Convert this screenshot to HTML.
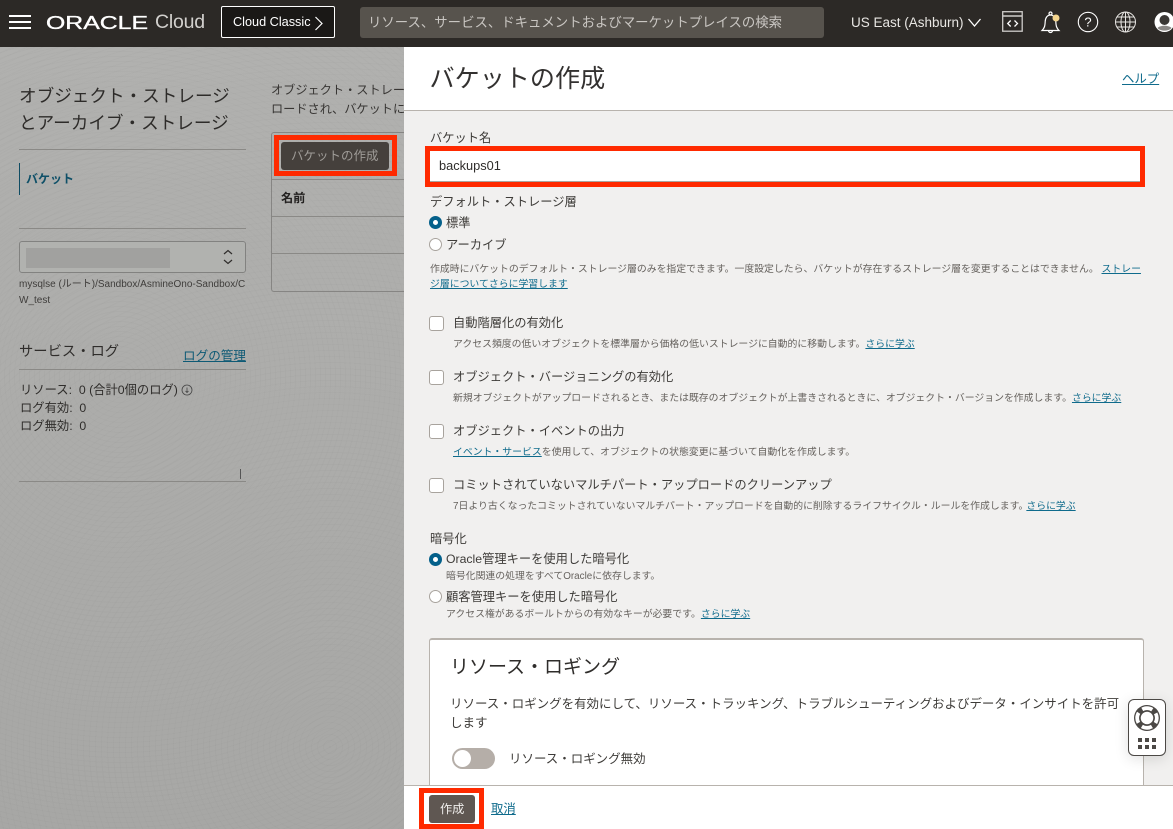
<!DOCTYPE html>
<html lang="ja"><head><meta charset="utf-8"><title>バケットの作成</title>
<style>
html,body{margin:0;padding:0}
body{width:1173px;height:829px;overflow:hidden;position:relative;background:#adadab;font-family:"Liberation Sans","Noto Sans CJK JP",sans-serif;color:#3a3835}
.t{position:absolute;white-space:nowrap;line-height:1}
.b{position:absolute;box-sizing:border-box}
a{color:#0f6b8c;text-decoration:underline}
.d{color:#2f2d2b}
.l{background:#8a8986;height:1px;position:absolute}
.s{font-size:9.870px;color:#66625e}
.m{font-size:12.250px;color:#3e3c39}
.cb{position:absolute;left:429px;width:15px;height:15px;box-sizing:border-box;background:#fff;border:1px solid #a8a39d;border-radius:3px}
.red{position:absolute;box-sizing:border-box;border:5px solid #ff2a00}
.rd{position:absolute;left:429px;width:13px;height:13px;box-sizing:border-box;border-radius:50%}
.on{background:#fff;border:4px solid #04608a}
.off{background:#fff;border:1px solid #a8a39d}
</style></head><body>
<div class="b" style="left:0;top:47px;width:404px;height:782px;background:
repeating-radial-gradient(circle at 120px 330px,rgba(0,0,0,.014) 0 1px,transparent 1px 5px),
repeating-radial-gradient(circle at 330px 700px,rgba(0,0,0,.014) 0 1px,transparent 1px 6px),
linear-gradient(#b1b1af,#a7a7a5)"></div>

<!-- top bar -->
<div class="b" style="left:0;top:0;width:1173px;height:47px;background:#2c2926"></div>
<div class="b" style="left:9px;top:15px;width:22px;height:2px;background:#fff"></div>
<div class="b" style="left:9px;top:21px;width:22px;height:2px;background:#fff"></div>
<div class="b" style="left:9px;top:27px;width:22px;height:2px;background:#fff"></div>
<svg style="position:absolute;left:44px;top:10px" width="108" height="26"><text x="2" y="19" font-family="Liberation Sans" font-size="18" font-weight="400" fill="#fff" stroke="#fff" stroke-width=".35" textLength="102" lengthAdjust="spacingAndGlyphs">ORACLE</text></svg>
<div class="t" style="left:155px;top:13px;font-size:19.500px;color:#d2d0cd;font-weight:400;letter-spacing:-.2px">Cloud</div>
<div class="b" style="left:221px;top:6px;width:114px;height:32px;background:#1a1816;border:1px solid #fff;border-radius:2px"></div>
<div class="t" style="left:233px;top:16px;font-size:12.700px;color:#fff">Cloud Classic</div>
<svg style="position:absolute;left:314px;top:15px" width="10" height="16"><path d="M1.500 2L8 8.500L1.500 15" fill="none" stroke="#fff" stroke-width="1.200"/></svg>
<div class="b" style="left:360px;top:7px;width:464px;height:31px;background:#57534d;border-radius:3px"></div>
<div class="t" style="left:368px;top:16px;font-size:13.400px;color:#c9c6c2">リソース、サービス、ドキュメントおよびマーケットプレイスの検索</div>
<div class="t" style="left:851px;top:16px;font-size:13.500px;color:#e8e6e3">US East (Ashburn)</div>
<svg style="position:absolute;left:967px;top:17px" width="16" height="11"><path d="M1.500 2L7.500 9L13.500 2" fill="none" stroke="#fff" stroke-width="1.300"/></svg>
<svg style="position:absolute;left:1000px;top:9px" width="25" height="25" fill="none" stroke="#cfcdca" stroke-width="1.300"><rect x="2.700" y="2.700" width="19.500" height="19.500"/><path d="M2.700 7H22.200" stroke-width="1.600"/><path d="M10.700 11.500l-3 3l3 3M14.500 11.500l3 3l-3 3" stroke="#fff"/></svg>
<svg style="position:absolute;left:1038px;top:10px" width="25" height="25" fill="none" stroke="#fff" stroke-width="1.200"><circle cx="12.500" cy="3.500" r="1.500"/><path d="M4 20.500c2.500-2.500 3-4.500 3.200-9c.2-4 2.300-6.500 5.300-6.500s5.100 2.500 5.300 6.500c.2 4.500.7 6.500 3.200 9zM10.500 20.500a2 2 0 0 0 4 0"/><circle cx="18" cy="8" r="3.500" fill="#f4d58d" stroke="none"/></svg>
<svg style="position:absolute;left:1076px;top:11px" width="23" height="23" fill="none" stroke="#fff" stroke-width="1.100"><circle cx="12" cy="11" r="9.700"/><text x="12" y="15.500" font-family="Liberation Sans" font-size="13" fill="#fff" stroke="none" text-anchor="middle">?</text></svg>
<svg style="position:absolute;left:1114px;top:11px" width="23" height="23" fill="none" stroke="#e8e6e3" stroke-width="1"><circle cx="11.500" cy="11" r="10"/><ellipse cx="11.500" cy="11" rx="4.500" ry="10"/><path d="M11.500 1V21M1.500 11H21.500M3 6H20M3 16H20"/></svg>
<svg style="position:absolute;left:1153px;top:11px" width="20" height="23"><circle cx="11.500" cy="11" r="10" fill="#fff"/><circle cx="11.500" cy="9" r="5" fill="#3a3734"/><path d="M4.500 17c2.500-3 11.500-3 14 0c-3 3.500-11 3.500-14 0z" fill="#8a8784"/></svg>

<!-- left column -->
<div class="t d" style="left:19px;top:88px;font-size:17.600px;color:#2d2b29">オブジェクト・ストレージ</div>
<div class="t d" style="left:19px;top:115px;font-size:17.600px;color:#2d2b29">とアーカイブ・ストレージ</div>
<div class="l" style="left:19px;top:149px;width:227px"></div>
<div class="b" style="left:19px;top:163px;width:1px;height:32px;background:#0f4c63"></div>
<div class="t" style="left:26px;top:173px;font-size:12px;font-weight:700;color:#0f5068">バケット</div>
<div class="l" style="left:19px;top:228px;width:227px"></div>
<div class="b" style="left:19px;top:241px;width:227px;height:32px;background:#b1b2af;border:1px solid #828280;border-radius:3px"></div>
<div class="b" style="left:26px;top:248px;width:144px;height:20px;background:#a1a19f"></div>
<svg style="position:absolute;left:222px;top:248px" width="12" height="18" fill="none" stroke="#2f2d2b" stroke-width="1.200"><path d="M2 6L6 2.500L10 6M2 12L6 15.500L10 12"/></svg>
<div class="t" style="left:19px;top:280px;font-size:10px;color:#3f3d3b">mysqlse (ルート)/Sandbox/AsmineOno-Sandbox/C</div>
<div class="t" style="left:19px;top:296px;font-size:10px;color:#3f3d3b">W_test</div>
<div class="t d" style="left:19px;top:345px;font-size:14.300px">サービス・ログ</div>
<a class="t" href="#" style="left:183px;top:350px;font-size:12.600px;color:#0e5a75">ログの管理</a>
<div class="l" style="left:19px;top:369px;width:227px"></div>
<div class="t" style="left:20px;top:384px;font-size:12.300px;color:#2f2d2b">リソース:&nbsp; 0 (合計0個のログ)</div>
<svg style="position:absolute;left:181px;top:384px" width="12" height="12" fill="none" stroke="#444" stroke-width=".8"><circle cx="6" cy="6" r="5"/><path d="M6 3.500V8M4.500 7L6 8.500L7.500 7"/></svg>
<div class="t" style="left:20px;top:402px;font-size:12.300px;color:#2f2d2b">ログ有効:&nbsp; 0</div>
<div class="t" style="left:20px;top:420px;font-size:12.300px;color:#2f2d2b">ログ無効:&nbsp; 0</div>
<div class="b" style="left:240px;top:469px;width:1px;height:10px;background:#555"></div>
<div class="l" style="left:19px;top:481px;width:227px"></div>

<!-- main column -->
<div class="t" style="left:271px;top:84px;font-size:12.200px;color:#383634">オブジェクト・ストレー</div>
<div class="t" style="left:271px;top:103px;font-size:12.200px;color:#383634">ロードされ、バケットに</div>
<div class="b" style="left:271px;top:132px;width:133px;height:160px;border:1px solid #868583;border-right:0;border-radius:3px 0 0 3px"></div>
<div class="l" style="left:272px;top:179px;width:132px"></div>
<div class="l" style="left:272px;top:216px;width:132px"></div>
<div class="l" style="left:272px;top:253px;width:132px"></div>
<div class="b" style="left:281px;top:142px;width:108px;height:28px;background:#45403c;border-radius:3px"></div>
<div class="t" style="left:291px;top:150px;font-size:12.500px;color:#9f9c98">バケットの作成</div>
<div class="t" style="left:281px;top:192px;font-size:12.200px;font-weight:700;color:#232120">名前</div>
<div class="red" style="left:274px;top:135px;width:123px;height:41px"></div>

<!-- panel -->
<div class="b" style="left:404px;top:47px;width:769px;height:782px;background:#f1f0ef"></div>
<div class="b" style="left:404px;top:47px;width:769px;height:64px;background:#fff;border-bottom:1px solid #b8b3ad"></div>
<div class="t" style="left:429.500px;top:67px;font-size:25.100px;color:#333130">バケットの作成</div>
<a class="t" href="#" style="left:1122px;top:73px;font-size:12.400px">ヘルプ</a>

<div class="t m" style="left:430px;top:132px">バケット名</div>
<div class="b" style="left:430px;top:151px;width:710px;height:31px;background:#fff;border-bottom:1px solid #aaa5a0"></div>
<div class="red" style="left:425px;top:146px;width:720px;height:41px"></div>
<div class="t" style="left:439px;top:160px;font-size:12.800px;color:#2f2d2b">backups01</div>

<div class="t m" style="left:430px;top:196px">デフォルト・ストレージ層</div>
<div class="rd on" style="top:216px"></div>
<div class="t m" style="left:446px;top:217px">標準</div>
<div class="rd off" style="top:238px"></div>
<div class="t m" style="left:446px;top:239px">アーカイブ</div>
<div class="t s" style="left:430px;top:265px">作成時にバケットのデフォルト・ストレージ層のみを指定できます。一度設定したら、バケットが存在するストレージ層を変更することはできません。 <a href="#">ストレー</a></div>
<a class="t s" href="#" style="left:430px;top:280px;color:#0f6b8c">ジ層についてさらに学習します</a>

<div class="cb" style="top:316px"></div>
<div class="t m" style="left:453px;top:317px">自動階層化の有効化</div>
<div class="t s" style="left:453px;top:340px">アクセス頻度の低いオブジェクトを標準層から価格の低いストレージに自動的に移動します。<a href="#">さらに学ぶ</a></div>
<div class="cb" style="top:370px"></div>
<div class="t m" style="left:453px;top:371px">オブジェクト・バージョニングの有効化</div>
<div class="t s" style="left:453px;top:394px">新規オブジェクトがアップロードされるとき、または既存のオブジェクトが上書きされるときに、オブジェクト・バージョンを作成します。<a href="#">さらに学ぶ</a></div>
<div class="cb" style="top:424px"></div>
<div class="t m" style="left:453px;top:425px">オブジェクト・イベントの出力</div>
<div class="t s" style="left:453px;top:448px"><a href="#">イベント・サービス</a>を使用して、オブジェクトの状態変更に基づいて自動化を作成します。</div>
<div class="cb" style="top:478px"></div>
<div class="t m" style="left:453px;top:479px">コミットされていないマルチパート・アップロードのクリーンアップ</div>
<div class="t s" style="left:453px;top:502px">7日より古くなったコミットされていないマルチパート・アップロードを自動的に削除するライフサイクル・ルールを作成します。<a href="#" style="margin-left:-2px">さらに学ぶ</a></div>

<div class="t m" style="left:430px;top:533px">暗号化</div>
<div class="rd on" style="top:553px"></div>
<div class="t m" style="left:446px;top:553px">Oracle管理キーを使用した暗号化</div>
<div class="t s" style="left:446px;top:572px">暗号化関連の処理をすべてOracleに依存します。</div>
<div class="rd off" style="top:590px"></div>
<div class="t m" style="left:446px;top:591px">顧客管理キーを使用した暗号化</div>
<div class="t s" style="left:446px;top:610px">アクセス権があるボールトからの有効なキーが必要です。<a href="#">さらに学ぶ</a></div>

<!-- card -->
<div class="b" style="left:429px;top:638px;width:715px;height:150px;background:#fff;border:1px solid #b8b3ad;border-top-width:2px;border-radius:3px 3px 0 0"></div>
<div class="t" style="left:450px;top:658px;font-size:19px;color:#2f2d2b">リソース・ロギング</div>
<div class="t" style="left:450px;top:698px;font-size:12.480px;color:#3e3c39">リソース・ロギングを有効にして、リソース・トラッキング、トラブルシューティングおよびデータ・インサイトを許可</div>
<div class="t" style="left:450px;top:717px;font-size:12.480px;color:#3e3c39">します</div>
<div class="b" style="left:452px;top:748px;width:43px;height:21px;background:#b5aea8;border-radius:11px"></div>
<div class="b" style="left:454px;top:750px;width:17px;height:17px;background:#fff;border-radius:50%"></div>
<div class="t" style="left:509px;top:753px;font-size:12.480px;color:#3e3c39">リソース・ロギング無効</div>

<!-- footer -->
<div class="b" style="left:404px;top:785px;width:769px;height:44px;background:#fff;border-top:1px solid #b8b3ad"></div>
<div class="b" style="left:429px;top:795px;width:46px;height:28px;background:#5f5752;border-radius:3px"></div>
<div class="t" style="left:440px;top:803px;font-size:12.200px;color:#f0eeec">作成</div>
<div class="red" style="left:419px;top:788px;width:65px;height:41px"></div>
<a class="t" href="#" style="left:491px;top:803px;font-size:12.400px">取消</a>

<!-- help widget -->
<div class="b" style="left:1128px;top:699px;width:38px;height:57px;background:#fff;border:1px solid #4b4845;border-radius:6px;box-shadow:0 3px 14px rgba(0,0,0,.12)"></div>
<svg style="position:absolute;left:1133px;top:704px" width="28" height="46"><circle cx="14" cy="14" r="13" fill="#4b4845"/><circle cx="14" cy="14" r="9.800" fill="none" stroke="#fff" stroke-width="3.800" stroke-dasharray="10.500 4.900" stroke-dashoffset="5.250"/><circle cx="14" cy="14" r="7" fill="#fff" stroke="#4b4845" stroke-width="1.500"/><g fill="#4b4845"><rect x="5" y="34" width="4" height="4"/><rect x="12" y="34" width="4" height="4"/><rect x="19" y="34" width="4" height="4"/><rect x="5" y="41" width="4" height="4"/><rect x="12" y="41" width="4" height="4"/><rect x="19" y="41" width="4" height="4"/></g></svg>
</body></html>
